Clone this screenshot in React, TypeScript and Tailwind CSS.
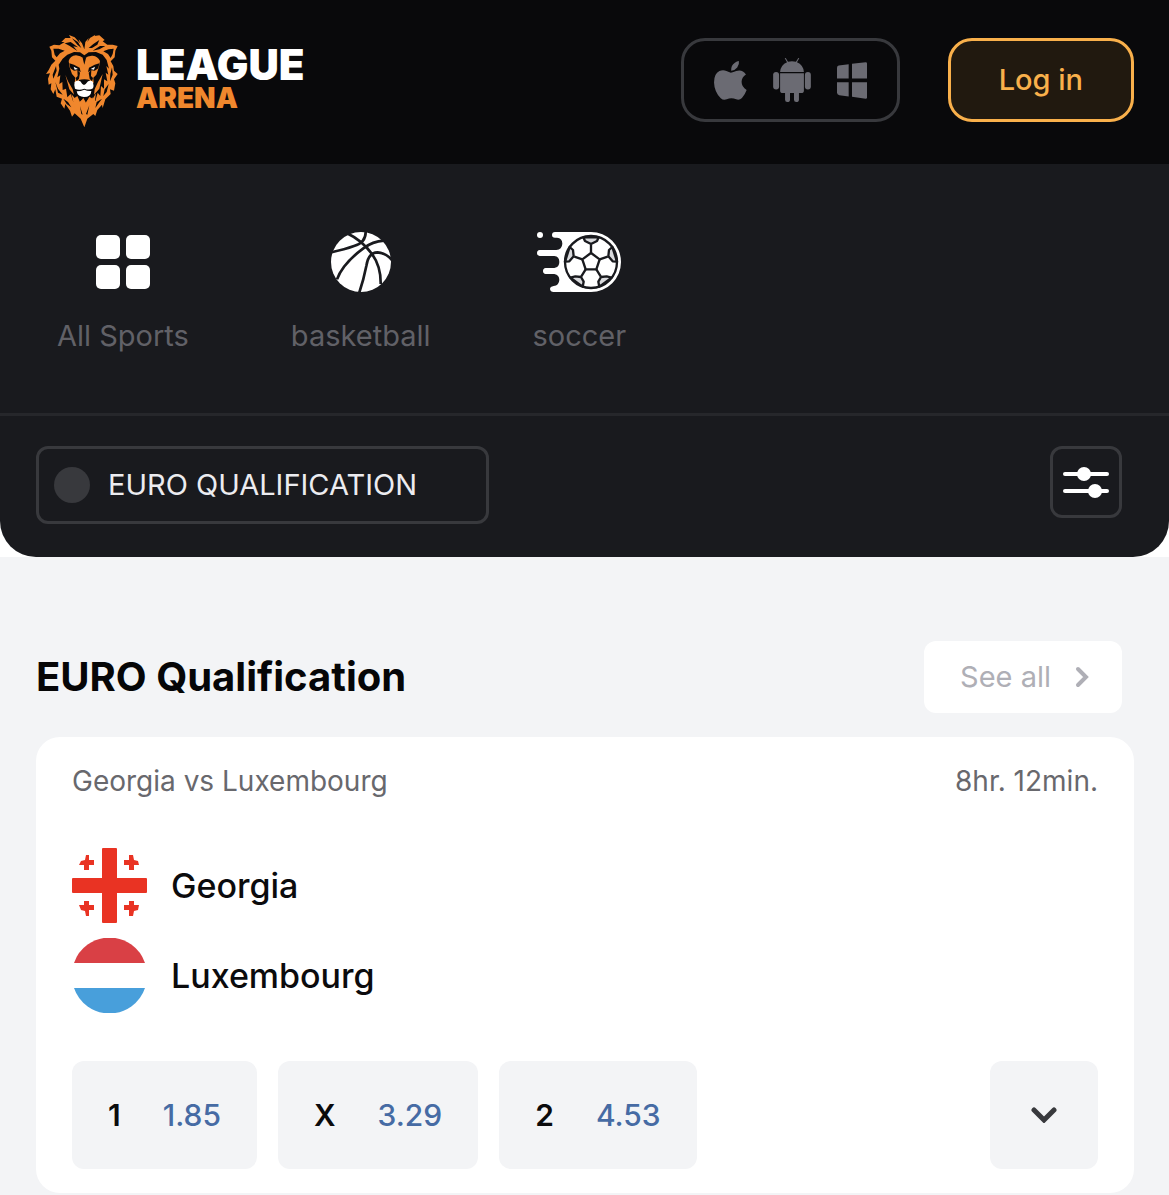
interface IconProps {
  className?: string;
}

function LionLogo({ className }: IconProps) {
  return (
    <svg viewBox="48 42 216 282" className={className} aria-hidden="true">
      <path
        fill="#f0872d"
        d="M163 88 L156 70 L146 58 L150 70 L134 52 L117 45 L122 54 L106 54 L94 66 L104 66 L88 76 L72 74 L58 80 L64 92 L66 112 L76 122 L64 134 L56 150 L48 162 L60 160 L54 176 L56 194 L64 190 L62 208 L70 222 L76 208 L80 230 L96 236 L92 250 L103 266 L106 252 L120 272 L126 290 L134 280 L152 296 L163 322 L172 296 L190 282 L196 288 L202 270 L216 254 L218 264 L226 238 L242 222 L240 208 L252 212 L256 190 L252 178 L263 162 L252 152 L250 138 L242 124 L254 112 L256 92 L263 78 L248 74 L232 74 L218 64 L224 60 L208 46 L194 48 L196 44 L180 54 L172 66 L176 54 L166 66 Z"
      />
      <g fill="#09090b">
        <path d="M86 134 L98 116 L112 104 L132 96 L150 97 L163 106 L176 97 L198 96 L218 104 L230 120 L237 146 L229 138 L235 164 L227 158 L232 184 L222 178 L222 206 L213 198 L211 228 L203 218 L196 244 L188 232 L180 256 L172 240 L163 262 L154 240 L146 252 L138 232 L130 246 L122 222 L112 232 L108 206 L98 210 L97 186 L88 192 L91 166 L82 172 L88 146 Z" />
        <path d="M104 70 L122 66 L144 82 L130 79 L142 93 L118 77 Z M126 55 L144 66 L154 84 L142 74 Z M176 84 L190 72 L208 60 L202 74 L186 84 Z M188 92 L210 78 L226 78 L208 88 Z" />
        <path d="M70 86 L86 86 L104 92 L90 100 L80 112 L74 104 Z M251 86 L236 88 L220 94 L234 102 L242 114 L248 102 Z" />
        <path d="M78 138 L80 152 L70 176 L68 164 Z M76 186 L84 206 L98 224 L84 218 Z M246 142 L248 164 L240 184 L241 162 Z M236 192 L230 216 L220 228 L224 208 Z M100 236 L114 246 L124 262 L110 252 Z M216 236 L206 250 L196 264 L200 246 Z" />
      </g>
      <g fill="#f0872d">
        <path d="M116 123 Q120 108 138 106 Q151 107 163 116 Q174 106 188 107 Q204 109 210 123 L207 140 L199 164 L190 173 L191 188 L162 194 L134 188 L136 173 L126 162 L119 142 Z" />
        <path d="M106 164 L114 184 L128 208 L132 224 L118 208 Z M218 162 L204 186 L194 208 L192 224 L208 206 Z" />
        <path d="M124 222 L134 234 L142 228 L150 246 L160 234 L168 248 L178 230 L188 236 L198 220 L192 262 L163 300 L134 262 Z" />
      </g>
      <g fill="#09090b">
        <path d="M118 130 L132 134 L149 143 L152 156 L141 151 L132 152 L121 145 Z M208 130 L194 134 L177 143 L174 156 L185 151 L194 152 L205 145 Z" />
        <path d="M142 150 L150 158 L147 176 L140 184 L137 174 L143 168 Z M184 150 L176 158 L179 176 L186 184 L189 174 L183 168 Z" />
        <path d="M146 180 Q163 176 180 180 L174 190 L163 197 L152 190 Z" />
        <path d="M158 114 L163 134 L168 114 Z" />
        <path d="M150 258 L158 284 L154 282 Z M178 256 L172 284 L168 282 Z" />
      </g>
      <g fill="#fff">
        <path d="M131 140 L144 147 L134 149 Z M195 140 L182 147 L192 149 Z" />
        <path d="M134 186 Q143 180 151 184 Q155 192 162 195 Q168 193 174 184 Q182 180 189 186 Q192 198 189 205 Q179 212 163 206 Q147 212 135 206 Q131 196 134 186 Z" />
        <path d="M140 214 Q153 214 163 209 Q173 214 184 213 Q183 231 162 231 Q143 231 140 214 Z" />
      </g>
    </svg>
  );
}

function AppleIcon({ className }: IconProps) {
  return (
    <svg viewBox="132 92 98 116" className={className} fill="currentColor" aria-hidden="true">
      <path d="M183 121 Q182 104 194 97 Q200 93 206 92 Q208 103 201 111 Q194 120 183 121 Z" />
      <path d="M182 127 Q190 126 198 122 Q216 116 227 132 Q214 140 214 154 Q214 170 229 178 Q224 192 215 202 Q208 209 198 206 Q183 200 170 206 Q160 210 152 203 Q133 184 132 156 Q132 130 148 122 Q159 117 169 122 Q177 126 182 127 Z" />
    </svg>
  );
}

function AndroidIcon({ className }: IconProps) {
  return (
    <svg viewBox="309 83 114 133" className={className} fill="currentColor" aria-hidden="true">
      <path d="M330 125 Q332 104 351 96 L344 84 L347 83 L354 94 Q366 91 378 94 L385 83 L388 84 L381 96 Q400 104 402 125 Z" />
      <path d="M330 129 H402 V181 Q402 189 394 189 H387 V209 Q387 216 379 216 Q372 216 372 209 V189 H360 V209 Q360 216 352 216 Q345 216 345 209 V189 H338 Q330 189 330 181 Z" />
      <rect x="309" y="125" width="18" height="53" rx="9" />
      <rect x="405" y="125" width="18" height="53" rx="9" />
    </svg>
  );
}

function WindowsIcon({ className }: IconProps) {
  return (
    <svg viewBox="501 95 90 110" className={className} fill="currentColor" aria-hidden="true">
      <path d="M501 111 Q501 106 506 105 L536 101 V144 H501 Z" />
      <path d="M546 100 L587 95 Q591 95 591 99 V144 H546 Z" />
      <path d="M501 155 H536 V198 L508 194 Q501 193 501 187 Z" />
      <path d="M546 155 H591 V201 Q591 205 587 205 L546 199 Z" />
    </svg>
  );
}

function GridIcon({ className }: IconProps) {
  return (
    <svg viewBox="0 0 54 54" className={className} fill="currentColor" aria-hidden="true">
      <rect width="24" height="24" rx="5" />
      <rect x="30" width="24" height="24" rx="5" />
      <rect y="30" width="24" height="24" rx="5" />
      <rect x="30" y="30" width="24" height="24" rx="5" />
    </svg>
  );
}

function BasketballIcon({ className }: IconProps) {
  return (
    <svg viewBox="63 66 180 180" className={className} aria-hidden="true">
      <circle cx="153" cy="156" r="90" fill="#fff" />
      <g fill="none" stroke="#191a1e" strokeWidth="8">
        <path d="M62 127 Q105 118 132 108 Q169 98 167 62" />
        <path d="M108 68 Q156 90 186 132 Q213 169 212 222" />
        <path d="M81 208 Q98 161 160 115 Q188 94 222 92" />
        <path d="M147 250 Q160 213 169 168 Q175 127 203 127 Q226 128 246 150" />
      </g>
    </svg>
  );
}

function SoccerIcon({ className }: IconProps) {
  return (
    <svg viewBox="684 66 252 180" className={className} aria-hidden="true">
      <g fill="#fff">
        <circle cx="693" cy="75" r="9" />
        <path d="M846 66 H738 Q729 66 729 75 Q729 83 738 83 H744 Q760 84 760 101 Q759 119 742 120 H692 Q684 121 684 129 Q684 137 692 138 H736 Q751 140 751 156 Q751 172 736 174 H710 Q702 175 702 183 Q702 191 710 192 H736 Q751 195 751 210 Q750 227 734 228 Q723 230 723 237 Q724 246 734 246 H846 A90 90 0 0 0 846 66 Z" />
      </g>
      <g stroke="#191a1e" strokeWidth="7" strokeLinejoin="round">
        <g fill="#d9dadd">
          <path d="M823 82 L828 93 L846 102 L864 93 L869 82 Z" />
          <path d="M910 111 L900 120 L898 139 L911 154 L924 155 Z" />
          <path d="M908 203 L893 199 L876 201 L868 215 L871 230 Z" />
          <path d="M821 230 L824 215 L816 201 L799 199 L784 203 Z" />
          <path d="M768 155 L781 154 L794 139 L792 120 L782 111 Z" />
        </g>
        <circle cx="846" cy="156" r="78" fill="none" />
        <path d="M846 129 L872 148 L862 178 H830 L820 148 Z" fill="none" />
        <path d="M846 129 V104 M872 148 L896 140 M862 178 L875 199 M830 178 L817 199 M820 148 L796 140" />
      </g>
    </svg>
  );
}

function SlidersIcon({ className }: IconProps) {
  return (
    <svg viewBox="0 0 46 32" className={className} fill="#fff" aria-hidden="true">
      <rect y="6" width="46" height="4" rx="2" />
      <rect y="23" width="46" height="4" rx="2" />
      <circle cx="21" cy="8" r="7" />
      <circle cx="32" cy="25" r="7" />
    </svg>
  );
}

function GeorgiaFlag({ className }: IconProps) {
  return (
    <svg viewBox="0 0 75 75" className={className} fill="#e93323" aria-hidden="true">
      <rect x="30" width="15" height="75" rx="1" />
      <rect y="30" width="75" height="15" rx="1" />
      <path d="M14 7 H17 V12 H22 V17 H17 V22 H12 V17 H7 L9 13 L13 12 Z" />
      <path d="M61 7 H57 V12 H52 V17 H57 V22 H62 V17 H67 L66 13 L62 12 Z" />
      <path d="M14 68 H17 V62 H22 V57 H17 V53 H12 V57 H7 L9 62 L13 63 Z" />
      <path d="M61 68 H57 V62 H52 V57 H57 V53 H62 V57 H67 L66 62 L62 63 Z" />
    </svg>
  );
}

function LuxembourgFlag({ className }: IconProps) {
  return (
    <svg viewBox="0 0 75 75" className={className} aria-hidden="true">
      <path d="M2 25 A37.5 37.5 0 0 1 73 25 Z" fill="#d94045" />
      <path d="M2 50 A37.5 37.5 0 0 0 73 50 Z" fill="#489fdb" />
    </svg>
  );
}

const sports = [
  { name: "All Sports", icon: <GridIcon className="size-[54px]" /> },
  { name: "basketball", icon: <BasketballIcon className="size-[60px]" /> },
  { name: "soccer", icon: <SoccerIcon className="h-[60px] w-[84px]" /> },
];

const teams = [
  { name: "Georgia", flag: <GeorgiaFlag className="size-[75px]" /> },
  { name: "Luxembourg", flag: <LuxembourgFlag className="size-[75px]" /> },
];

const odds = [
  { label: "1", value: "1.85" },
  { label: "X", value: "3.29" },
  { label: "2", value: "4.53" },
];

function Header() {
  return (
    <header className="flex items-start justify-between bg-[#09090b] pt-[34px] pr-[35px] pb-[36px] pl-[46px]">
      <a href="#" className="flex items-start gap-[18px]">
        <LionLogo className="h-[94px] w-[72px]" />
        <div className="flex flex-col pt-3 font-black">
          <span className="text-[42px] leading-[38px] text-white">LEAGUE</span>
          <span className="text-[28px] leading-[28px] text-[#f0872d]">ARENA</span>
        </div>
      </a>
      <div className="flex gap-12 pt-1">
        <div className="flex h-[84px] items-center gap-[26px] rounded-[24px] border-3 border-[#38393d] px-[30px] text-[#6b6b73]">
          <AppleIcon className="h-[39px] w-[33px]" />
          <AndroidIcon className="h-[44px] w-[38px]" />
          <WindowsIcon className="h-[37px] w-[30px]" />
        </div>
        <button className="h-[84px] rounded-[24px] border-3 border-[#f9b04b] bg-[#21190f] px-12 text-[29px] font-medium text-[#f9b04b]">
          Log in
        </button>
      </div>
    </header>
  );
}

function SportsNav() {
  return (
    <nav className="flex gap-[102px] px-[57px] pt-[68px] pb-[59px]">
      {sports.map((sport) => (
        <a key={sport.name} href="#" className="flex flex-col items-center gap-[26px]">
          <span className="flex h-[60px] items-center text-white">{sport.icon}</span>
          <span className="text-[29px] leading-9 text-[#616167]">{sport.name}</span>
        </a>
      ))}
    </nav>
  );
}

function FilterBar() {
  return (
    <div className="flex items-start justify-between border-t-3 border-[#26272b] pt-[30px] pr-[47px] pb-[33px] pl-9">
      <button className="flex h-[78px] w-[453px] items-center gap-[18px] rounded-xl border-3 border-[#38393d] px-[15px] text-[29px] text-[#ececf0]">
        <span className="size-9 rounded-full bg-[#38393d]" />
        EURO QUALIFICATION
      </button>
      <button
        aria-label="Filters"
        className="flex size-[72px] items-center justify-center rounded-xl border-3 border-[#38393d]"
      >
        <SlidersIcon className="h-8 w-[46px]" />
      </button>
    </div>
  );
}

function MatchCard() {
  return (
    <article className="rounded-[24px] bg-white px-9 py-6">
      <div className="flex justify-between text-[28px] leading-10 text-[#68686d]">
        <span>Georgia vs Luxembourg</span>
        <span>8hr. 12min.</span>
      </div>
      <div className="mt-[47px] flex flex-col gap-[15px]">
        {teams.map((team) => (
          <div key={team.name} className="flex items-center gap-6 text-[34px] font-medium text-[#0b0b0d]">
            {team.flag}
            <span>{team.name}</span>
          </div>
        ))}
      </div>
      <div className="mt-12 flex gap-[21px] text-[30px] font-medium">
        {odds.map((odd) => (
          <button
            key={odd.label}
            className="flex h-[108px] items-center gap-[42px] rounded-xl bg-[#f3f4f6] px-9"
          >
            <span className="font-semibold text-[#0b0b0d]">{odd.label}</span>
            <span className="text-[#466ba4]">{odd.value}</span>
          </button>
        ))}
        <button
          aria-label="More odds"
          className="ml-auto flex size-[108px] items-center justify-center rounded-xl bg-[#f3f4f6]"
        >
          <svg viewBox="0 0 26 16" className="h-4 w-[26px]" fill="none" aria-hidden="true">
            <path d="M3 3 L13 13 L23 3" stroke="#38393d" strokeWidth="5" strokeLinecap="round" />
          </svg>
        </button>
      </div>
    </article>
  );
}

export default function App() {
  return (
    <div className="min-h-screen bg-[#f3f4f6] font-['Inter',sans-serif]">
      <Header />
      <div className="bg-white">
        <div className="rounded-b-[36px] bg-[#191a1e]">
          <SportsNav />
          <FilterBar />
        </div>
      </div>
      <main className="pt-[84px] pr-[35px] pb-[3px] pl-9">
        <div className="mb-6 flex items-center justify-between pr-3">
          <h1 className="text-[40px] font-bold text-[#060607]">EURO Qualification</h1>
          <button className="flex h-[72px] items-center gap-6 rounded-xl bg-white pr-[33px] pl-9 text-[29px] text-[#afafb6]">
            See all
            <svg viewBox="0 0 14 22" className="h-[22px] w-[14px]" fill="none" aria-hidden="true">
              <path d="M3 3 L11 11 L3 19" stroke="currentColor" strokeWidth="4" strokeLinecap="round" />
            </svg>
          </button>
        </div>
        <MatchCard />
      </main>
    </div>
  );
}
